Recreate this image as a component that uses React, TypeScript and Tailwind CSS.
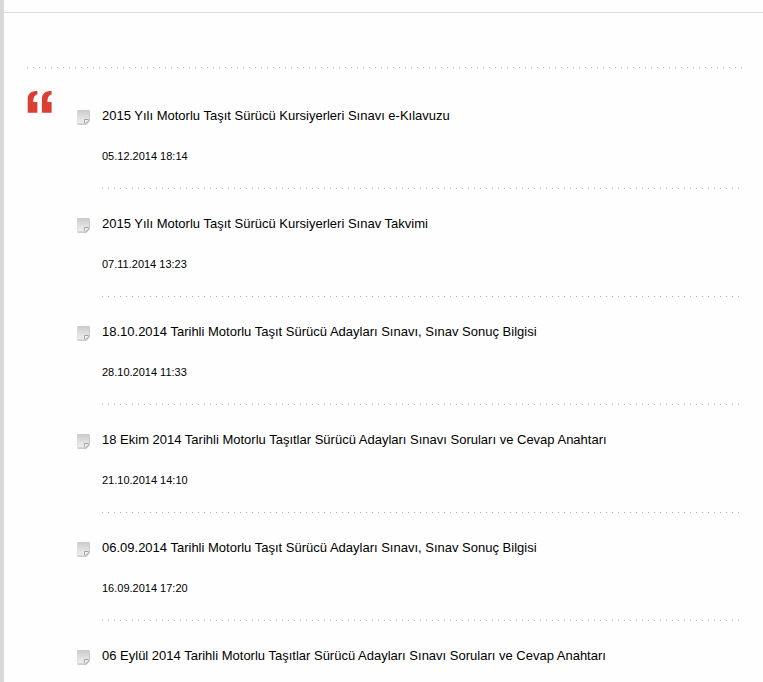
type Announcement = {
  title: string
  date?: string
}

const announcements: Announcement[] = [
  { title: "2015 Yılı Motorlu Taşıt Sürücü Kursiyerleri Sınavı e-Kılavuzu", date: "05.12.2014 18:14" },
  { title: "2015 Yılı Motorlu Taşıt Sürücü Kursiyerleri Sınav Takvimi", date: "07.11.2014 13:23" },
  { title: "18.10.2014 Tarihli Motorlu Taşıt Sürücü Adayları Sınavı, Sınav Sonuç Bilgisi", date: "28.10.2014 11:33" },
  { title: "18 Ekim 2014 Tarihli Motorlu Taşıtlar Sürücü Adayları Sınavı Soruları ve Cevap Anahtarı", date: "21.10.2014 14:10" },
  { title: "06.09.2014 Tarihli Motorlu Taşıt Sürücü Adayları Sınavı, Sınav Sonuç Bilgisi", date: "16.09.2014 17:20" },
  { title: "06 Eylül 2014 Tarihli Motorlu Taşıtlar Sürücü Adayları Sınavı Soruları ve Cevap Anahtarı" },
]

function DottedLine() {
  return (
    <div className="h-px bg-[linear-gradient(to_right,#b4b4b4_1px,transparent_1px)] bg-[length:6px_1px] bg-repeat-x" />
  )
}

function QuoteIcon() {
  return (
    <svg width="26" height="22" viewBox="0 0 26 22" fill="#d93f33" className="block" aria-hidden="true">
      <path d="M10.4 0v3.6C7.6 4.2 6.4 6.4 6.2 11H10.4V21.7H0.7V8.2C0.7 2.6 4 0 10.4 0Z" />
      <path d="M24.6 0v3.6C21.8 4.2 20.6 6.4 20.4 11H24.6V21.7H14.9V8.2C14.9 2.6 18.2 0 24.6 0Z" />
    </svg>
  )
}

function NoteIcon() {
  return (
    <svg width="14" height="17" viewBox="0 0 14 17" className="block" aria-hidden="true">
      <defs>
        <linearGradient id="note" x1="0" y1="0" x2="0" y2="1">
          <stop offset="0" stopColor="#cbcbcb" />
          <stop offset="1" stopColor="#f0f0f0" />
        </linearGradient>
      </defs>
      <path d="M0.5 1.5H12.8V12L9.5 15.8H0.5Z" fill="#b0b0b0" opacity="0.85" />
      <path d="M0.5 1H12V10.5L8 14.5H0.5Z" fill="url(#note)" />
      <path d="M11.5 10.5H7.5V14.5Z" fill="#f8f8f8" />
      <path d="M11.5 10.5H7.5V14" fill="none" stroke="#a2a2a2" />
    </svg>
  )
}

export default function App() {
  return (
    <div className="min-h-screen border-l-4 border-[#d8d8d6] bg-[#fefefe] font-['Liberation_Sans',Arial,sans-serif] text-black">
      {/* Top bar */}
      <div className="h-[13px] border-b border-[#dcdcdc]" />

      <main className="pt-[54px] pr-5 pl-[23px]">
        <DottedLine />

        <div className="flex pt-[13px]">
          <div className="w-[50px] shrink-0 pt-[10px]">
            <QuoteIcon />
          </div>

          <ul className="min-w-0 flex-1">
            {announcements.map((item) => (
              <li key={item.title} className="flex">
                <div className="w-[25px] shrink-0 pt-7">
                  <NoteIcon />
                </div>
                <div className="min-w-0 flex-1 pt-[25px]">
                  <h3 className="text-[13px] leading-5">
                    <a href="#">{item.title}</a>
                  </h3>
                  {item.date && (
                    <>
                      <p className="mt-5 mb-[22px] text-[11px] leading-5">{item.date}</p>
                      <DottedLine />
                    </>
                  )}
                </div>
              </li>
            ))}
          </ul>
        </div>
      </main>
    </div>
  )
}
